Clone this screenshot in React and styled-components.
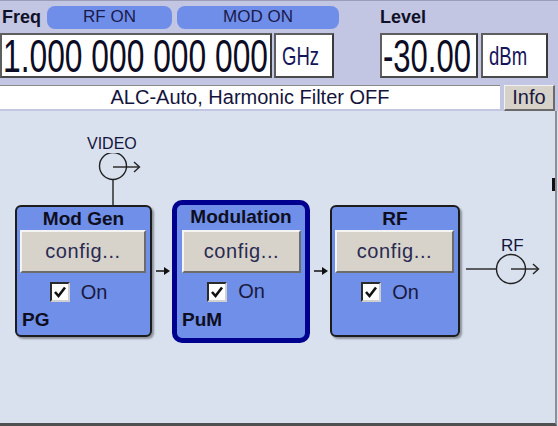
import React from "react";
import styled, { createGlobalStyle } from "styled-components";

const GlobalStyle = createGlobalStyle`
  html, body {
    margin: 0;
    padding: 0;
    background: #d9e1ee;
  }
  * {
    box-sizing: border-box;
  }
`;

const Screen = styled.div`
  width: 558px;
  height: 426px;
  overflow: hidden;
  font-family: "Liberation Sans", Arial, sans-serif;
  color: #14143c;
  display: flex;
  flex-direction: column;
`;

const Header = styled.div`
  height: 111px;
  background: #c3c6e3;
  border-top: 1px solid #9a9cb8;
  display: flex;
  flex-direction: column;
`;

const TopRow = styled.div`
  height: 31px;
  display: flex;
  align-items: center;
  padding-top: 2px;
`;

const Label = styled.div`
  font-weight: bold;
  font-size: 18px;
  color: #101028;
  width: ${(p) => p.width}px;
  padding-left: ${(p) => p.pad || 0}px;
`;

const Pill = styled.div`
  width: ${(p) => p.width}px;
  height: 23px;
  margin-right: ${(p) => p.gap || 0}px;
  background: #6f8ee9;
  border-radius: 8px;
  display: flex;
  align-items: center;
  justify-content: center;
  font-size: 17px;
  color: #1a1a4a;
`;

const FieldRow = styled.div`
  display: flex;
  align-items: flex-start;
  height: 46px;
  margin-top: 1px;
`;

const Field = styled.div`
  width: ${(p) => p.width}px;
  height: 45px;
  margin-left: ${(p) => p.left || 0}px;
  background: #fff;
  border: 2px solid #5e5e5e;
  border-right-color: #3a3a3a;
  border-bottom-color: #4a4a4a;
  position: relative;
`;

const BigValue = styled.span`
  position: absolute;
  left: ${(p) => p.x}px;
  top: -3px;
  font-size: 47px;
  line-height: 48px;
  white-space: nowrap;
  color: #0c0c24;
  transform: scaleX(${(p) => p.sx});
  transform-origin: left center;
`;

const UnitValue = styled.span`
  position: absolute;
  left: ${(p) => p.x}px;
  top: 7px;
  font-size: 25px;
  line-height: 28px;
  white-space: nowrap;
  color: #14145a;
  transform: scaleX(0.74);
  transform-origin: left center;
`;

const StatusRow = styled.div`
  display: flex;
  margin-top: 7px;
  height: 26px;
`;

const Status = styled.div`
  width: 500px;
  height: 24px;
  background: #fff;
  border-top: 1px solid #8a8a8a;
  display: flex;
  align-items: center;
  justify-content: center;
  font-size: 20px;
  color: #14143c;
`;

const InfoButton = styled.div`
  width: 51px;
  height: 26px;
  margin-left: 4px;
  background: #d6d2ca;
  border: 1px solid #f2f2f2;
  border-right: 2px solid #6a6a6a;
  border-bottom: 2px solid #6a6a6a;
  display: flex;
  align-items: center;
  justify-content: center;
  font-size: 20px;
  color: #1a1a40;
`;

const Body = styled.div`
  flex: 1;
  width: 557px;
  background: #d9e1ee;
  border-right: 2px solid #8e9096;
  border-bottom: 3px solid #505050;
  position: relative;
  padding-top: 89px;
`;

const EdgeMark = styled.div`
  position: absolute;
  right: 0;
  top: 67px;
  width: 3px;
  height: 13px;
  background: #111;
`;

const Chain = styled.div`
  display: flex;
  align-items: center;
  padding-left: 15px;
  height: 142px;
`;

const Block = styled.div`
  position: relative;
  width: ${(p) => p.width}px;
  height: ${(p) => (p.selected ? 143 : 132)}px;
  background: #6f8fe8;
  border: ${(p) => (p.selected ? "5px solid #00008f" : "2px solid #1c1c1c")};
  border-radius: ${(p) => (p.selected ? 10 : 6)}px;
  box-shadow: ${(p) => (p.selected ? "none" : "2px 2px 2px rgba(0,0,0,0.35)")};
  display: flex;
  flex-direction: column;
`;

const BlockTitle = styled.div`
  height: ${(p) => p.h}px;
  display: flex;
  align-items: center;
  justify-content: center;
  font-weight: bold;
  font-size: 19px;
  color: #0e0e1e;
`;

const ConfigButton = styled.div`
  height: 43px;
  margin: 0 4px 0 ${(p) => p.left}px;
  background: #d7d3cb;
  border: 2px solid #f4f4f4;
  border-right-color: #6c6c6c;
  border-bottom-color: #6c6c6c;
  display: flex;
  align-items: center;
  justify-content: center;
  font-size: 20px;
  letter-spacing: 0.6px;
  color: #2a2a52;
`;

const CheckRow = styled.div`
  display: flex;
  align-items: center;
  justify-content: center;
  gap: 11px;
  margin-top: 9px;
  padding-right: 10px;
  height: 20px;
  font-size: 20px;
  color: #1a1a40;
`;

const CheckBox = styled.div`
  width: 20px;
  height: 20px;
  background: #fff;
  border: 2px solid #2a2a2a;
  border-right-color: #d0d0d0;
  border-bottom-color: #d0d0d0;
  display: flex;
  align-items: center;
  justify-content: center;
`;

const BlockTag = styled.div`
  margin-top: 7px;
  padding-left: 5px;
  font-weight: bold;
  font-size: 19px;
  color: #0e0e1e;
`;

const Arrow = styled.svg`
  width: ${(p) => p.w}px;
  height: 10px;
  display: block;
`;

const InPort = styled.div`
  position: absolute;
  left: 70px;
  top: -72px;
  display: flex;
  flex-direction: column;
`;

const OutPort = styled.div`
  position: relative;
  margin-left: 6px;
`;

const PortLabel = styled.div`
  font-size: ${(p) => p.size}px;
  line-height: 18px;
  color: #14143c;
`;

const OutLabel = styled(PortLabel)`
  position: absolute;
  left: 35px;
  top: -16px;
`;

const CheckMark = () => (
  <svg width="14" height="14" viewBox="0 0 14 14">
    <path d="M2 7 L5.5 11 L12 2.5" fill="none" stroke="#111" strokeWidth="2.6" />
  </svg>
);

const ChainArrow = ({ w }) => (
  <Arrow w={w} viewBox={`0 0 ${w} 10`}>
    <line x1="4" y1="5" x2={w - 4} y2="5" stroke="#111" strokeWidth="1.5" />
    <path d={`M${w - 8} 1 L${w - 2} 5 L${w - 8} 9 Z`} fill="#111" />
  </Arrow>
);

const FuncBlock = ({ title, tag, width, selected, left, input }) => (
  <Block width={width} selected={selected}>
    <BlockTitle h={selected ? 25 : 23}>{title}</BlockTitle>
    <ConfigButton left={left}>config...</ConfigButton>
    <CheckRow>
      <CheckBox>
        <CheckMark />
      </CheckBox>
      <span>On</span>
    </CheckRow>
    {tag && <BlockTag>{tag}</BlockTag>}
    {input && (
      <InPort>
        <PortLabel size={16}>{input}</PortLabel>
        <svg width="60" height="54" viewBox="0 0 60 54">
          <circle cx="26" cy="13" r="13.5" fill="none" stroke="#222" strokeWidth="1.4" />
          <line x1="26" y1="14" x2="52" y2="14" stroke="#222" strokeWidth="1.4" />
          <path d="M47 9 L52.5 14 L47 19" fill="none" stroke="#222" strokeWidth="1.4" />
          <line x1="26" y1="27" x2="26" y2="54" stroke="#222" strokeWidth="1.4" />
        </svg>
      </InPort>
    )}
  </Block>
);

export default function App() {
  return (
    <>
      <GlobalStyle />
      <Screen>
        <Header>
          <TopRow>
            <Label width={47} pad={2}>Freq</Label>
            <Pill width={125} gap={5}>RF ON</Pill>
            <Pill width={162}>MOD ON</Pill>
            <Label width={80} pad={41}>Level</Label>
          </TopRow>
          <FieldRow>
            <Field width={272}>
              <BigValue x={1} sx={0.676}>1.000 000 000 000</BigValue>
            </Field>
            <Field width={60} left={2}>
              <UnitValue x={6}>GHz</UnitValue>
            </Field>
            <Field width={98} left={46}>
              <BigValue x={1} sx={0.66}>-30.00</BigValue>
            </Field>
            <Field width={67} left={3}>
              <UnitValue x={6}>dBm</UnitValue>
            </Field>
          </FieldRow>
          <StatusRow>
            <Status>ALC-Auto, Harmonic Filter OFF</Status>
            <InfoButton>Info</InfoButton>
          </StatusRow>
        </Header>
        <Body>
          <EdgeMark />
          <Chain>
            <FuncBlock title="Mod Gen" tag="PG" width={137} left={3} input="VIDEO" />
            <ChainArrow w={20} />
            <FuncBlock title="Modulation" tag="PuM" width={138} selected left={5} />
            <ChainArrow w={20} />
            <FuncBlock title="RF" width={130} left={3} />
            <OutPort>
              <OutLabel size={17}>RF</OutLabel>
              <svg width="80" height="32" viewBox="0 0 80 32">
                <line x1="0" y1="16" x2="30" y2="16" stroke="#222" strokeWidth="1.4" />
                <circle cx="45" cy="16" r="14.5" fill="none" stroke="#222" strokeWidth="1.4" />
                <line x1="45" y1="16" x2="72" y2="16" stroke="#222" strokeWidth="1.4" />
                <path d="M67 11 L72.5 16 L67 21" fill="none" stroke="#222" strokeWidth="1.4" />
              </svg>
            </OutPort>
          </Chain>
        </Body>
      </Screen>
    </>
  );
}
